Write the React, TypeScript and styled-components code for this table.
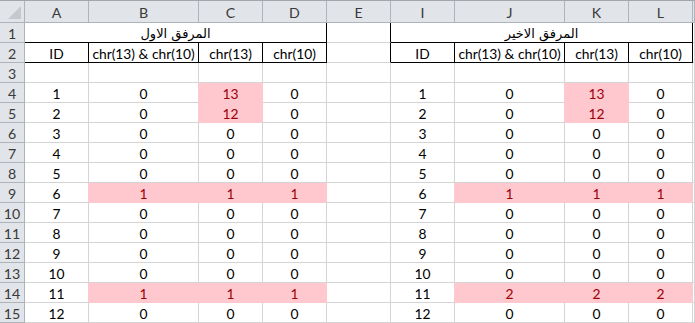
import React from 'react'
import styled, { createGlobalStyle } from 'styled-components'

const GRID = '#d4d4d4'
const HEAD_BG = '#e1e4e8'
const HEAD_LINE = '#afb4ba'
const PINK = '#ffc7ce'
const DARK_RED = '#9c0006'
const BLACK = '#000'

const GlobalStyle = createGlobalStyle`
  html, body {
    margin: 0;
    padding: 0;
    background: #fff;
    overflow: hidden;
  }
  body {
    font-family: Lato, "DejaVu Sans", sans-serif;
    font-size: 13.8px;
    color: #000;
  }
`

const Sheet = styled.div`
  display: grid;
  grid-template-columns: 25px 64px 110px 64px 64px 64px 64px 110px 64px 64px 1fr;
  grid-template-rows: 22px repeat(15, 20px);
  width: 695px;
  border-top: 1px solid #a2a6ab;
  box-sizing: border-box;
`

const Corner = styled.div`
  background: ${HEAD_BG};
  border-right: 1px solid ${HEAD_LINE};
  border-bottom: 1px solid ${HEAD_LINE};
  display: flex;
  align-items: flex-end;
  justify-content: flex-end;
  padding: 0 3px 3px 0;
  box-sizing: border-box;
`

const SelectAll = styled.span`
  width: 13px;
  height: 13px;
  background: #c5c9ce;
  clip-path: polygon(100% 0, 100% 100%, 0 100%);
`

const ColHeader = styled.div`
  background: ${HEAD_BG};
  border-right: 1px solid ${HEAD_LINE};
  border-bottom: 1px solid ${HEAD_LINE};
  color: #3a3a3a;
  font-size: 14.2px;
  display: flex;
  align-items: center;
  justify-content: center;
  box-sizing: border-box;
  padding-top: 1px;
`

const RowHeader = styled.div`
  background: ${HEAD_BG};
  border-right: 1px solid ${HEAD_LINE};
  border-bottom: 1px solid ${HEAD_LINE};
  color: #3a3a3a;
  font-size: 14.2px;
  display: flex;
  align-items: center;
  justify-content: center;
  box-sizing: border-box;
  padding-top: 1px;
`

const Cell = styled.div<{ $span?: number; $fill?: boolean; $right?: string; $bottom?: string }>`
  grid-column: span ${({ $span }) => $span ?? 1};
  background: ${({ $fill }) => ($fill ? PINK : '#fff')};
  color: ${({ $fill }) => ($fill ? DARK_RED : '#000')};
  border-right: 1px solid ${({ $right }) => $right ?? GRID};
  border-bottom: 1px solid ${({ $bottom }) => $bottom ?? GRID};
  display: flex;
  align-items: center;
  justify-content: center;
  box-sizing: border-box;
  padding-top: 2px;
  white-space: nowrap;
  overflow: hidden;
`

const Title = styled(Cell)`
  direction: rtl;
  font-family: "DejaVu Sans", sans-serif;
  font-size: 13px;
`

type Val = string | { v: string; hot: true }
const hot = (v: string): Val => ({ v, hot: true })

const COLS = ['A', 'B', 'C', 'D', 'E', 'I', 'J', 'K', 'L', '']

const left: Val[][] = [
  ['1', '0', hot('13'), '0'],
  ['2', '0', hot('12'), '0'],
  ['3', '0', '0', '0'],
  ['4', '0', '0', '0'],
  ['5', '0', '0', '0'],
  ['6', hot('1'), hot('1'), hot('1')],
  ['7', '0', '0', '0'],
  ['8', '0', '0', '0'],
  ['9', '0', '0', '0'],
  ['10', '0', '0', '0'],
  ['11', hot('1'), hot('1'), hot('1')],
  ['12', '0', '0', '0'],
]

const right: Val[][] = left.map((row, i) =>
  i === 10 ? ['11', hot('2'), hot('2'), hot('2')] : row
)

const headings = ['ID', 'chr(13) & chr(10)', 'chr(13)', 'chr(10)']

const isHot = (v: Val | undefined) => typeof v === 'object'
const text = (v: Val) => (typeof v === 'object' ? v.v : v)

function DataRow({ n, row }: { n: number; row: number }) {
  const cells: Val[] = [...left[row], '', ...right[row], '']
  return (
    <>
      <RowHeader>{n}</RowHeader>
      {cells.map((v, i) => {
        const fill = isHot(v)
        const nextFill = isHot(cells[i + 1])
        return (
          <Cell
            key={i}
            $fill={fill}
            $right={fill || nextFill ? PINK : undefined}
            $bottom={fill ? PINK : undefined}
          >
            {text(v)}
          </Cell>
        )
      })}
    </>
  )
}

export default function App() {
  return (
    <>
      <GlobalStyle />
      <Sheet>
        <Corner>
          <SelectAll />
        </Corner>
        {COLS.map((c, i) => (
          <ColHeader key={i}>{c}</ColHeader>
        ))}

        <RowHeader>1</RowHeader>
        <Title $span={4} $right={BLACK} $bottom={BLACK}>
          المرفق الاول
        </Title>
        <Cell $right={BLACK} />
        <Title $span={4} $right={BLACK} $bottom={BLACK}>
          المرفق الاخير
        </Title>
        <Cell />

        <RowHeader>2</RowHeader>
        {headings.map((h, i) => (
          <Cell key={'l' + i} $right={BLACK} $bottom={BLACK}>
            {h}
          </Cell>
        ))}
        <Cell $right={BLACK} />
        {headings.map((h, i) => (
          <Cell key={'r' + i} $right={BLACK} $bottom={BLACK}>
            {h}
          </Cell>
        ))}
        <Cell />

        <RowHeader>3</RowHeader>
        {COLS.map((_, i) => (
          <Cell key={i} />
        ))}

        {left.map((_, i) => (
          <DataRow key={i} n={i + 4} row={i} />
        ))}
      </Sheet>
    </>
  )
}
